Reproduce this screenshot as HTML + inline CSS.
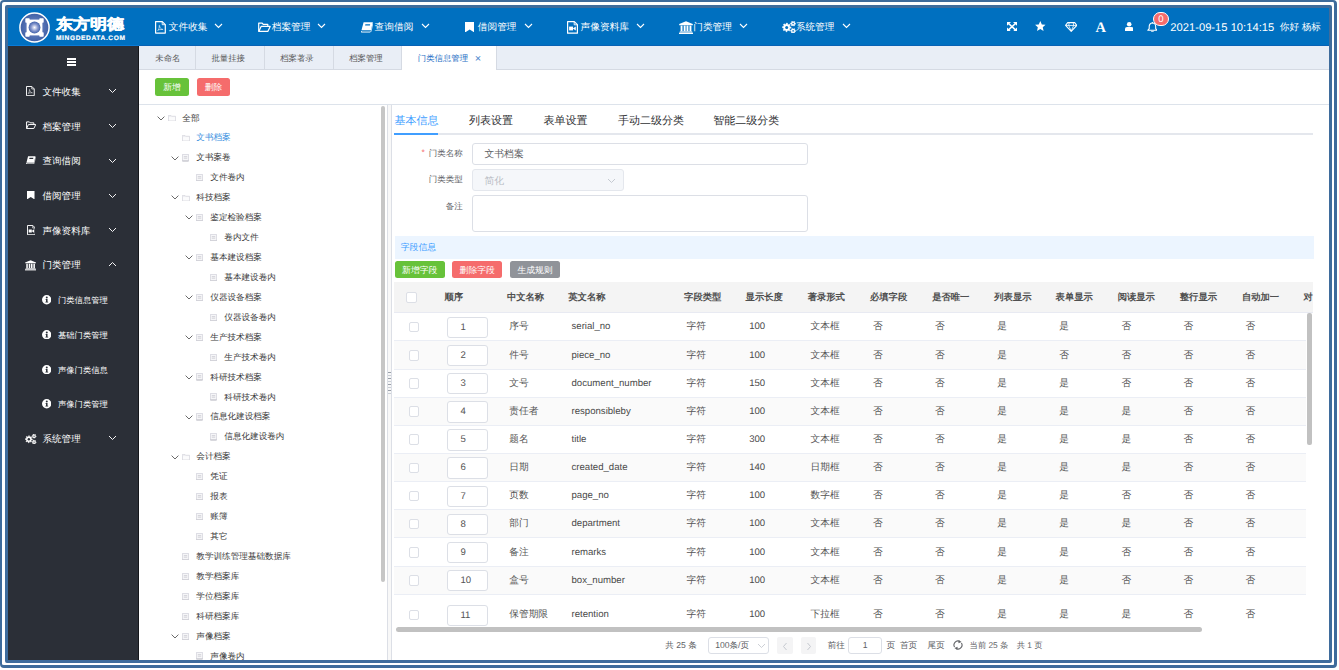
<!DOCTYPE html><html><head><meta charset="utf-8"><style>
*{box-sizing:border-box;margin:0;padding:0}
html,body{width:1339px;height:670px;overflow:hidden;background:#fff;font-family:"Liberation Sans",sans-serif;text-rendering:geometricPrecision}
.a{position:absolute;white-space:nowrap}
.frame-o{position:absolute;left:0;top:0;width:1337px;height:668px;border:solid #3e6b9b;border-width:2px 3px 3px 2px;border-radius:4px}
.frame-i{position:absolute;left:5px;top:5px;width:1327px;height:658px;border:3px solid #3f6c9c;border-radius:2px}
#app{position:absolute;left:8px;top:8px;width:1321px;height:652px;overflow:hidden;background:#fff}
.hdr{position:absolute;left:0;top:0;width:1321px;height:38px;background:#0070c0;border-bottom:1px solid #0862b5}
.nav{position:absolute;top:0;height:38px;color:#fff;font-size:9.7px;line-height:39px}
.side{position:absolute;left:0;top:38px;width:131px;height:614px;background:#2b2f37;border-right:1px solid #15171b}
.sitem{position:absolute;left:0;width:131px;height:20px;color:#fff;font-size:9.55px;line-height:23px}
.tabs{position:absolute;left:131px;top:38px;width:1190px;height:24px;background:#e9eef6;border-bottom:1px solid #d5dae3}
.tab{position:absolute;top:0;height:23px;line-height:24.5px;font-size:8.4px;color:#5a5a5a;text-align:left;padding-left:16.2px;border-right:1px solid #d5dae3}
.btn{position:absolute;height:17.5px;line-height:19.5px;font-size:8.7px;color:#fff;text-align:center;border-radius:2.5px}
.tree{position:absolute;left:131px;top:97px;width:248px;height:555px;overflow:hidden}
.ti{position:absolute;height:20px;line-height:20px;font-size:8.6px;color:#333}
.tc{position:absolute;font-size:9.7px;color:#555;line-height:16px}
.te{position:absolute;font-size:9.6px;color:#4a4a4a;line-height:16px}
</style></head><body>
<div class="frame-o"></div><div class="frame-i"></div>
<div id="app">

<div class="hdr">
<div class="a" style="left:0;top:37px;width:131px;height:1px;background:#0a7bd8"></div>
<svg class="a" style="left:11px;top:4px" width="31" height="31" viewBox="0 0 31 31">
<defs><radialGradient id="lg" cx="50%" cy="50%" r="50%"><stop offset="0" stop-color="#8a9fd0"/><stop offset="0.6" stop-color="#5673b4"/><stop offset="1" stop-color="#3f5fa6"/></radialGradient>
<radialGradient id="lg2" cx="50%" cy="50%" r="50%"><stop offset="0" stop-color="#fff"/><stop offset="0.55" stop-color="#8b9bd0"/><stop offset="1" stop-color="#4262aa"/></radialGradient></defs>
<circle cx="15.5" cy="15.5" r="14.6" fill="url(#lg)" stroke="#fff" stroke-width="1.5"/>
<rect x="7.6" y="7.6" width="15.8" height="15.8" fill="#fff"/>
<rect x="6.3" y="6.3" width="4.4" height="4.4" rx="0.8" fill="#fff"/><rect x="20.3" y="6.3" width="4.4" height="4.4" rx="0.8" fill="#fff"/>
<rect x="6.3" y="20.3" width="4.4" height="4.4" rx="0.8" fill="#fff"/><rect x="20.3" y="20.3" width="4.4" height="4.4" rx="0.8" fill="#fff"/>
<circle cx="15.5" cy="15.5" r="5.9" fill="url(#lg2)"/>
</svg>
<div class="a" style="left:48px;top:4.5px;font-size:17.5px;font-weight:bold;color:#fff;line-height:22px;letter-spacing:0px;-webkit-text-stroke:0.6px #fff;transform:scale(0.97,0.84);transform-origin:0 50%">东方明德</div>
<div class="a" style="left:48px;top:26.8px;font-size:6.6px;font-weight:bold;color:#fff;line-height:8px;letter-spacing:0.62px;-webkit-text-stroke:0.2px #fff">MINGDEDATA.COM</div>
<svg class="a" style="left:147px;top:13px" width="11.00" height="12.70" viewBox="0 0 11 12.7"><path d="M0.6 0.6 H7.3 L10.3 3.6 V12.1 H0.6 Z" fill="none" stroke="#fff" stroke-width="1.2" stroke-linejoin="round"/><path d="M7.2 0.8 V3.7 H10.1" fill="none" stroke="#fff" stroke-width="0.9"/><path d="M2.6 10 C3.6 8.6 4.6 6.4 4.2 4.6 C3.9 4.1 4.9 4.1 4.7 5.2 C4.6 6.5 5.8 8.2 8.2 8.6 M3.2 8.8 L7.8 8.4" fill="none" stroke="#fff" stroke-width="0.6"/></svg>
<div class="nav" style="left:160.8px">文件收集</div>
<svg class="a" style="left:205.9px;top:15px" width="9" height="6" viewBox="0 0 9 6"><path d="M1 1 L4.5 4.5 L8 1" fill="none" stroke="#fff" stroke-width="1.1"/></svg>
<svg class="a" style="left:249.8px;top:13.8px" width="12.80" height="10.20" viewBox="0 0 12.8 10.2"><path d="M0.7 9.4 V1.1 H4.2 L5.2 2.3 H9.8 V4.4" fill="none" stroke="#fff" stroke-width="1.2" stroke-linejoin="round"/><path d="M0.8 9.4 L3.1 4.4 H12.2 L9.8 9.4 Z" fill="none" stroke="#fff" stroke-width="1.2" stroke-linejoin="round"/></svg>
<div class="nav" style="left:263.7px">档案管理</div>
<svg class="a" style="left:309.2px;top:15px" width="9" height="6" viewBox="0 0 9 6"><path d="M1 1 L4.5 4.5 L8 1" fill="none" stroke="#fff" stroke-width="1.1"/></svg>
<svg class="a" style="left:352.6px;top:13.899999999999999px" width="12.20" height="10.80" viewBox="0 0 12.2 10.8"><path d="M2.6 0.3 H11.9 L9.9 8.3 H0.5 Z" fill="#fff"/><path d="M4.4 2.2 H9.2 L8.9 3.6 H4.1 Z" fill="#0070c0"/><path d="M0.4 8.9 H9.6 L9.3 10.6 H0.3 C-0.1 10.2 0 9.3 0.4 8.9 Z" fill="#fff"/><path d="M1 9.5 H9" stroke="#0070c0" stroke-width="0.6"/><path d="M11.9 1.5 L10 9.8" stroke="#fff" stroke-width="0.7"/></svg>
<div class="nav" style="left:366.6px">查询借阅</div>
<svg class="a" style="left:412.5px;top:15px" width="9" height="6" viewBox="0 0 9 6"><path d="M1 1 L4.5 4.5 L8 1" fill="none" stroke="#fff" stroke-width="1.1"/></svg>
<svg class="a" style="left:456.7px;top:13.899999999999999px" width="9.40" height="10.50" viewBox="0 0 9.4 10.5"><path d="M0 0 H9.4 V10.5 L4.7 7.5 L0 10.5 Z" fill="#fff"/></svg>
<div class="nav" style="left:469.8px">借阅管理</div>
<svg class="a" style="left:515.7px;top:15px" width="9" height="6" viewBox="0 0 9 6"><path d="M1 1 L4.5 4.5 L8 1" fill="none" stroke="#fff" stroke-width="1.1"/></svg>
<svg class="a" style="left:558.9px;top:12.899999999999999px" width="11.00" height="12.80" viewBox="0 0 11 12.8"><path d="M0.6 0.6 H7.3 L10.4 3.7 V12.2 H0.6 Z" fill="none" stroke="#fff" stroke-width="1.2" stroke-linejoin="round"/><path d="M7.2 0.8 V3.8 H10.2" fill="none" stroke="#fff" stroke-width="0.9"/><rect x="2.1" y="5.6" width="3.9" height="3.8" fill="#fff"/><path d="M5.8 7.5 L8.8 5.4 V9.6 Z" fill="#fff"/></svg>
<div class="nav" style="left:572.6px">声像资料库</div>
<svg class="a" style="left:628.3px;top:15px" width="9" height="6" viewBox="0 0 9 6"><path d="M1 1 L4.5 4.5 L8 1" fill="none" stroke="#fff" stroke-width="1.1"/></svg>
<svg class="a" style="left:670.9px;top:12.899999999999999px" width="14.00" height="13.00" viewBox="0 0 14 13"><path d="M7 0.2 L13.8 3 V4.2 H0.2 V3 Z" fill="#fff"/><rect x="1.6" y="4.6" width="1.9" height="5.6" fill="#fff"/><rect x="4.7" y="4.6" width="1.9" height="5.6" fill="#fff"/><rect x="7.5" y="4.6" width="1.9" height="5.6" fill="#fff"/><rect x="10.5" y="4.6" width="1.9" height="5.6" fill="#fff"/><rect x="0.8" y="10.4" width="12.4" height="1" fill="#fff"/><rect x="0" y="11.6" width="14" height="1.4" fill="#fff"/></svg>
<div class="nav" style="left:685.2px">门类管理</div>
<svg class="a" style="left:730.7px;top:15px" width="9" height="6" viewBox="0 0 9 6"><path d="M1 1 L4.5 4.5 L8 1" fill="none" stroke="#fff" stroke-width="1.1"/></svg>
<svg class="a" style="left:773.9px;top:12.899999999999999px" width="14.00" height="12.60" viewBox="0 0 14 12.6"><polygon points="9.09,6.18 9.05,7.05 7.68,7.47 7.42,8.03 7.96,9.35 7.32,9.93 6.05,9.26 5.47,9.47 4.92,10.79 4.05,10.75 3.63,9.38 3.07,9.12 1.75,9.66 1.17,9.02 1.84,7.75 1.63,7.17 0.31,6.62 0.35,5.75 1.72,5.33 1.98,4.77 1.44,3.45 2.08,2.87 3.35,3.54 3.93,3.33 4.48,2.01 5.35,2.05 5.77,3.42 6.33,3.68 7.65,3.14 8.23,3.78 7.56,5.05 7.77,5.63" fill="#fff" stroke="#fff" stroke-width="0.5" stroke-linejoin="round"/><circle cx="4.7" cy="6.4" r="1.5" fill="#0070c0"/><polygon points="13.69,2.43 13.65,3.11 12.78,3.43 12.51,3.83 12.54,4.76 11.94,5.06 11.22,4.47 10.73,4.44 9.95,4.93 9.39,4.55 9.54,3.64 9.33,3.20 8.51,2.77 8.55,2.09 9.42,1.77 9.69,1.37 9.66,0.44 10.26,0.14 10.98,0.73 11.47,0.76 12.25,0.27 12.81,0.65 12.66,1.56 12.87,2.00" fill="#fff" stroke="#fff" stroke-width="0.5" stroke-linejoin="round"/><circle cx="11.1" cy="2.6" r="0.8" fill="#0070c0"/><polygon points="13.69,9.73 13.65,10.41 12.78,10.73 12.51,11.13 12.54,12.06 11.94,12.36 11.22,11.77 10.73,11.74 9.95,12.23 9.39,11.85 9.54,10.94 9.33,10.50 8.51,10.07 8.55,9.39 9.42,9.07 9.69,8.67 9.66,7.74 10.26,7.44 10.98,8.03 11.47,8.06 12.25,7.57 12.81,7.95 12.66,8.86 12.87,9.30" fill="#fff" stroke="#fff" stroke-width="0.5" stroke-linejoin="round"/><circle cx="11.1" cy="9.9" r="0.8" fill="#0070c0"/></svg>
<div class="nav" style="left:787.7px">系统管理</div>
<svg class="a" style="left:834px;top:15px" width="9" height="6" viewBox="0 0 9 6"><path d="M1 1 L4.5 4.5 L8 1" fill="none" stroke="#fff" stroke-width="1.1"/></svg>
<svg class="a" style="left:998.6px;top:13.9px" width="10" height="9.3" viewBox="0 0 10 9.3"><path d="M0 0 H4 L0 3.8 Z M10 0 H6 L10 3.8 Z M0 9.3 H4 L0 5.5 Z M10 9.3 H6 L10 5.5 Z" fill="#fff"/><path d="M1 1 L9 8.3 M9 1 L1 8.3" stroke="#fff" stroke-width="1.6"/></svg>
<svg class="a" style="left:1027.3px;top:12.9px" width="10.6" height="10.3" viewBox="0 0 24 23"><path d="M12 0 L15.5 7.6 L23.8 8.5 L17.6 14.1 L19.4 22.3 L12 18.1 L4.6 22.3 L6.4 14.1 L0.2 8.5 L8.5 7.6 Z" fill="#fff"/></svg>
<svg class="a" style="left:1056.6px;top:14.2px" width="12.4" height="10" viewBox="0 0 12.4 9.6" preserveAspectRatio="none"><path d="M2.7 0.6 H9.7 L11.8 3.3 L6.2 9 L0.6 3.3 Z" fill="none" stroke="#fff" stroke-width="1.1" stroke-linejoin="round"/><path d="M0.8 3.3 H11.6 M4.2 0.7 L3.7 3.3 L6.2 8.6 L8.7 3.3 L8.2 0.7" fill="none" stroke="#fff" stroke-width="0.8"/></svg>
<div class="a" style="left:1087.6px;top:11.8px;font-family:'Liberation Serif',serif;font-weight:bold;font-size:14.5px;line-height:16px;color:#fff">A</div>
<svg class="a" style="left:1117px;top:14.2px" width="8.4" height="8.9" viewBox="0 0 8.4 8.9"><circle cx="4.2" cy="2.3" r="2.3" fill="#fff"/><path d="M0 8.9 V6.9 Q0 5 2 5 H6.4 Q8.4 5 8.4 6.9 V8.9 Z" fill="#fff"/></svg>
<svg class="a" style="left:1138.5px;top:14.2px" width="10.9" height="10.2" viewBox="0 0 10.9 10.2"><path d="M5.45 1 C3.2 1 2.2 2.9 2.2 4.8 V6.7 L0.8 8.3 H10.1 L8.7 6.7 V4.8 C8.7 2.9 7.7 1 5.45 1 Z" fill="none" stroke="#fff" stroke-width="1.1" stroke-linejoin="round"/><path d="M4.2 8.8 A1.3 1.3 0 0 0 6.7 8.8" fill="none" stroke="#fff" stroke-width="1"/><circle cx="5.45" cy="0.8" r="0.7" fill="#fff"/></svg>
<div class="a" style="left:1145px;top:4.3px;width:15.6px;height:13.9px;border-radius:7px;background:#f56c6c;border:1px solid #fff;color:#fff;font-size:9.6px;line-height:13.4px;text-align:center">0</div>
<div class="a" style="left:1162.3px;top:11.5px;font-size:11.2px;line-height:16px;color:#fff">2021-09-15 10:14:15</div>
<div class="a" style="left:1271.8px;top:12px;font-size:9.6px;line-height:16px;color:#fff">你好 杨标</div>
</div>
<div class="side">
<div class="a" style="left:59px;top:12px;width:9px;height:1.6px;background:#fff;box-shadow:0 3px 0 #fff,0 6px 0 #fff"></div>
<div class="sitem" style="top:34.9px"><span class="a" style="left:34.5px">文件收集</span></div>
<svg class="a" style="left:18.2px;top:39.7px" width="8.80" height="10.16" viewBox="0 0 11 12.7"><path d="M0.6 0.6 H7.3 L10.3 3.6 V12.1 H0.6 Z" fill="none" stroke="#fff" stroke-width="1.2" stroke-linejoin="round"/><path d="M7.2 0.8 V3.7 H10.1" fill="none" stroke="#fff" stroke-width="0.9"/><path d="M2.6 10 C3.6 8.6 4.6 6.4 4.2 4.6 C3.9 4.1 4.9 4.1 4.7 5.2 C4.6 6.5 5.8 8.2 8.2 8.6 M3.2 8.8 L7.8 8.4" fill="none" stroke="#fff" stroke-width="0.6"/></svg>
<svg class="a" style="left:100.2px;top:42.400000000000006px" width="9" height="6" viewBox="0 0 9 6"><path d="M1 1 L4.5 4.5 L8 1" fill="none" stroke="#fff" stroke-width="0.95"/></svg>
<div class="sitem" style="top:69.6px"><span class="a" style="left:34.5px">档案管理</span></div>
<svg class="a" style="left:17.7px;top:75px" width="10.24" height="8.16" viewBox="0 0 12.8 10.2"><path d="M0.7 9.4 V1.1 H4.2 L5.2 2.3 H9.8 V4.4" fill="none" stroke="#fff" stroke-width="1.2" stroke-linejoin="round"/><path d="M0.8 9.4 L3.1 4.4 H12.2 L9.8 9.4 Z" fill="none" stroke="#fff" stroke-width="1.2" stroke-linejoin="round"/></svg>
<svg class="a" style="left:100.2px;top:77.10000000000001px" width="9" height="6" viewBox="0 0 9 6"><path d="M1 1 L4.5 4.5 L8 1" fill="none" stroke="#fff" stroke-width="0.95"/></svg>
<div class="sitem" style="top:104.3px"><span class="a" style="left:34.5px">查询借阅</span></div>
<svg class="a" style="left:18.2px;top:109.69999999999999px" width="9.76" height="8.64" viewBox="0 0 12.2 10.8"><path d="M2.6 0.3 H11.9 L9.9 8.3 H0.5 Z" fill="#fff"/><path d="M4.4 2.2 H9.2 L8.9 3.6 H4.1 Z" fill="#2b3038"/><path d="M0.4 8.9 H9.6 L9.3 10.6 H0.3 C-0.1 10.2 0 9.3 0.4 8.9 Z" fill="#fff"/><path d="M1 9.5 H9" stroke="#2b3038" stroke-width="0.6"/><path d="M11.9 1.5 L10 9.8" stroke="#fff" stroke-width="0.7"/></svg>
<svg class="a" style="left:100.2px;top:111.80000000000001px" width="9" height="6" viewBox="0 0 9 6"><path d="M1 1 L4.5 4.5 L8 1" fill="none" stroke="#fff" stroke-width="0.95"/></svg>
<div class="sitem" style="top:139.0px"><span class="a" style="left:34.5px">借阅管理</span></div>
<svg class="a" style="left:19px;top:145px" width="7.52" height="8.40" viewBox="0 0 9.4 10.5"><path d="M0 0 H9.4 V10.5 L4.7 7.5 L0 10.5 Z" fill="#fff"/></svg>
<svg class="a" style="left:100.2px;top:146.5px" width="9" height="6" viewBox="0 0 9 6"><path d="M1 1 L4.5 4.5 L8 1" fill="none" stroke="#fff" stroke-width="0.95"/></svg>
<div class="sitem" style="top:173.7px"><span class="a" style="left:34.5px">声像资料库</span></div>
<svg class="a" style="left:18.6px;top:179px" width="8.80" height="10.24" viewBox="0 0 11 12.8"><path d="M0.6 0.6 H7.3 L10.4 3.7 V12.2 H0.6 Z" fill="none" stroke="#fff" stroke-width="1.2" stroke-linejoin="round"/><path d="M7.2 0.8 V3.8 H10.2" fill="none" stroke="#fff" stroke-width="0.9"/><rect x="2.1" y="5.6" width="3.9" height="3.8" fill="#fff"/><path d="M5.8 7.5 L8.8 5.4 V9.6 Z" fill="#fff"/></svg>
<svg class="a" style="left:100.2px;top:181.20000000000002px" width="9" height="6" viewBox="0 0 9 6"><path d="M1 1 L4.5 4.5 L8 1" fill="none" stroke="#fff" stroke-width="0.95"/></svg>
<div class="sitem" style="top:208.4px"><span class="a" style="left:34.5px">门类管理</span></div>
<svg class="a" style="left:16.9px;top:214.2px" width="11.20" height="10.40" viewBox="0 0 14 13"><path d="M7 0.2 L13.8 3 V4.2 H0.2 V3 Z" fill="#fff"/><rect x="1.6" y="4.6" width="1.9" height="5.6" fill="#fff"/><rect x="4.7" y="4.6" width="1.9" height="5.6" fill="#fff"/><rect x="7.5" y="4.6" width="1.9" height="5.6" fill="#fff"/><rect x="10.5" y="4.6" width="1.9" height="5.6" fill="#fff"/><rect x="0.8" y="10.4" width="12.4" height="1" fill="#fff"/><rect x="0" y="11.6" width="14" height="1.4" fill="#fff"/></svg>
<svg class="a" style="left:100.2px;top:214.9px" width="9" height="6" viewBox="0 0 9 6"><path d="M1 5 L4.5 1.5 L8 5" fill="none" stroke="#fff" stroke-width="0.95"/></svg>
<div class="sitem" style="top:243.1px;font-size:8.3px"><svg class="a" style="left:33.8px;top:6.2px" width="9.4" height="9.4" viewBox="0 0 10 10"><circle cx="5" cy="5" r="5" fill="#fff"/><circle cx="5.1" cy="2.6" r="1.05" fill="#2b3038"/><path d="M3.9 4.3 H5.9 V7.2 H6.6 V8.1 H3.6 V7.2 H4.3 V5.2 H3.9 Z" fill="#2b3038"/></svg><span class="a" style="left:50px">门类信息管理</span></div>
<div class="sitem" style="top:277.8px;font-size:8.3px"><svg class="a" style="left:33.8px;top:6.2px" width="9.4" height="9.4" viewBox="0 0 10 10"><circle cx="5" cy="5" r="5" fill="#fff"/><circle cx="5.1" cy="2.6" r="1.05" fill="#2b3038"/><path d="M3.9 4.3 H5.9 V7.2 H6.6 V8.1 H3.6 V7.2 H4.3 V5.2 H3.9 Z" fill="#2b3038"/></svg><span class="a" style="left:50px">基础门类管理</span></div>
<div class="sitem" style="top:312.5px;font-size:8.3px"><svg class="a" style="left:33.8px;top:6.2px" width="9.4" height="9.4" viewBox="0 0 10 10"><circle cx="5" cy="5" r="5" fill="#fff"/><circle cx="5.1" cy="2.6" r="1.05" fill="#2b3038"/><path d="M3.9 4.3 H5.9 V7.2 H6.6 V8.1 H3.6 V7.2 H4.3 V5.2 H3.9 Z" fill="#2b3038"/></svg><span class="a" style="left:50px">声像门类信息</span></div>
<div class="sitem" style="top:347.2px;font-size:8.3px"><svg class="a" style="left:33.8px;top:6.2px" width="9.4" height="9.4" viewBox="0 0 10 10"><circle cx="5" cy="5" r="5" fill="#fff"/><circle cx="5.1" cy="2.6" r="1.05" fill="#2b3038"/><path d="M3.9 4.3 H5.9 V7.2 H6.6 V8.1 H3.6 V7.2 H4.3 V5.2 H3.9 Z" fill="#2b3038"/></svg><span class="a" style="left:50px">声像门类管理</span></div>
<div class="sitem" style="top:381.9px"><span class="a" style="left:34.5px">系统管理</span></div>
<svg class="a" style="left:17.2px;top:387.8px" width="11.48" height="10.33" viewBox="0 0 14 12.6"><polygon points="9.09,6.18 9.05,7.05 7.68,7.47 7.42,8.03 7.96,9.35 7.32,9.93 6.05,9.26 5.47,9.47 4.92,10.79 4.05,10.75 3.63,9.38 3.07,9.12 1.75,9.66 1.17,9.02 1.84,7.75 1.63,7.17 0.31,6.62 0.35,5.75 1.72,5.33 1.98,4.77 1.44,3.45 2.08,2.87 3.35,3.54 3.93,3.33 4.48,2.01 5.35,2.05 5.77,3.42 6.33,3.68 7.65,3.14 8.23,3.78 7.56,5.05 7.77,5.63" fill="#fff" stroke="#fff" stroke-width="0.5" stroke-linejoin="round"/><circle cx="4.7" cy="6.4" r="1.5" fill="#2b3038"/><polygon points="13.69,2.43 13.65,3.11 12.78,3.43 12.51,3.83 12.54,4.76 11.94,5.06 11.22,4.47 10.73,4.44 9.95,4.93 9.39,4.55 9.54,3.64 9.33,3.20 8.51,2.77 8.55,2.09 9.42,1.77 9.69,1.37 9.66,0.44 10.26,0.14 10.98,0.73 11.47,0.76 12.25,0.27 12.81,0.65 12.66,1.56 12.87,2.00" fill="#fff" stroke="#fff" stroke-width="0.5" stroke-linejoin="round"/><circle cx="11.1" cy="2.6" r="0.8" fill="#2b3038"/><polygon points="13.69,9.73 13.65,10.41 12.78,10.73 12.51,11.13 12.54,12.06 11.94,12.36 11.22,11.77 10.73,11.74 9.95,12.23 9.39,11.85 9.54,10.94 9.33,10.50 8.51,10.07 8.55,9.39 9.42,9.07 9.69,8.67 9.66,7.74 10.26,7.44 10.98,8.03 11.47,8.06 12.25,7.57 12.81,7.95 12.66,8.86 12.87,9.30" fill="#fff" stroke="#fff" stroke-width="0.5" stroke-linejoin="round"/><circle cx="11.1" cy="9.9" r="0.8" fill="#2b3038"/></svg>
<svg class="a" style="left:100.2px;top:389.4px" width="9" height="6" viewBox="0 0 9 6"><path d="M1 1 L4.5 4.5 L8 1" fill="none" stroke="#fff" stroke-width="0.95"/></svg>
</div>
<div class="tabs">
<div class="tab" style="left:0.0px;width:57.3px;padding-left:16.3px">未命名</div>
<div class="tab" style="left:56.6px;width:69.5px;padding-left:15.8px">批量挂接</div>
<div class="tab" style="left:125.4px;width:69.7px;padding-left:15.8px">档案著录</div>
<div class="tab" style="left:194.4px;width:69.1px;padding-left:15.8px">档案管理</div>
<div class="tab" style="left:262.8px;width:95.6px;height:24px;background:#fff;color:#1f6fc5;text-align:left;padding-left:16px">门类信息管理<span class="a" style="left:72.9px;top:1.2px;color:#4a86cc;font-size:11px">×</span></div>
</div>
<div class="a" style="left:131px;top:62px;width:1190px;height:35px;border-bottom:1px solid #dde3eb"></div>
<div class="btn" style="left:147.3px;top:70.4px;width:33.3px;background:#67c23a">新增</div>
<div class="btn" style="left:189px;top:70.4px;width:33px;background:#f56c6c">删除</div>
<svg class="a" style="left:149.0px;top:107.7px" width="8" height="5" viewBox="0 0 8 5"><path d="M0.6 0.6 L4 4 L7.4 0.6" fill="none" stroke="#6a6a6a" stroke-width="1"/></svg>
<svg class="a" style="left:160.1px;top:106.9px" width="8" height="6.4" viewBox="0 0 8 6.4"><path d="M0.4 0.4 H3 L3.7 1.3 H7.6 V6 H0.4 Z" fill="#fbfbfc" stroke="#d4d4dc" stroke-width="0.8"/><path d="M0.4 1.6 H7.6" stroke="#e2e2e8" stroke-width="0.6"/></svg>
<div class="a" style="left:174.3px;top:99.5px;line-height:20px;font-size:8.6px;color:#3a3a3a">全部</div>
<svg class="a" style="left:174.1px;top:126.8px" width="8" height="6.4" viewBox="0 0 8 6.4"><path d="M0.4 0.4 H3 L3.7 1.3 H7.6 V6 H0.4 Z" fill="#fbfbfc" stroke="#d4d4dc" stroke-width="0.8"/><path d="M0.4 1.6 H7.6" stroke="#e2e2e8" stroke-width="0.6"/></svg>
<div class="a" style="left:188.3px;top:119.4px;line-height:20px;font-size:8.6px;color:#3b90e0">文书档案</div>
<svg class="a" style="left:163.0px;top:147.6px" width="8" height="5" viewBox="0 0 8 5"><path d="M0.6 0.6 L4 4 L7.4 0.6" fill="none" stroke="#6a6a6a" stroke-width="1"/></svg>
<svg class="a" style="left:174.1px;top:146.2px" width="7" height="7.4" viewBox="0 0 7 7.4"><path d="M0.4 0.4 H6.6 V7 H0.4 Z" fill="#f6f6f8" stroke="#d2d2da" stroke-width="0.8"/><path d="M1.8 2.6 H5.2 M1.8 4.2 H5.2" stroke="#c4c4cc" stroke-width="0.7"/><path d="M0.4 7 H6.6" stroke="#b8b8c0" stroke-width="0.8"/></svg>
<div class="a" style="left:188.3px;top:139.4px;line-height:20px;font-size:8.6px;color:#3a3a3a">文书案卷</div>
<svg class="a" style="left:188.1px;top:166.1px" width="7" height="7.4" viewBox="0 0 7 7.4"><path d="M0.4 0.4 H6.6 V7 H0.4 Z" fill="#f6f6f8" stroke="#d2d2da" stroke-width="0.8"/><path d="M1.8 2.6 H5.2 M1.8 4.2 H5.2" stroke="#c4c4cc" stroke-width="0.7"/><path d="M0.4 7 H6.6" stroke="#b8b8c0" stroke-width="0.8"/></svg>
<div class="a" style="left:202.3px;top:159.3px;line-height:20px;font-size:8.6px;color:#3a3a3a">文件卷内</div>
<svg class="a" style="left:163.0px;top:187.4px" width="8" height="5" viewBox="0 0 8 5"><path d="M0.6 0.6 L4 4 L7.4 0.6" fill="none" stroke="#6a6a6a" stroke-width="1"/></svg>
<svg class="a" style="left:174.1px;top:186.6px" width="8" height="6.4" viewBox="0 0 8 6.4"><path d="M0.4 0.4 H3 L3.7 1.3 H7.6 V6 H0.4 Z" fill="#fbfbfc" stroke="#d4d4dc" stroke-width="0.8"/><path d="M0.4 1.6 H7.6" stroke="#e2e2e8" stroke-width="0.6"/></svg>
<div class="a" style="left:188.3px;top:179.2px;line-height:20px;font-size:8.6px;color:#3a3a3a">科技档案</div>
<svg class="a" style="left:177.0px;top:207.3px" width="8" height="5" viewBox="0 0 8 5"><path d="M0.6 0.6 L4 4 L7.4 0.6" fill="none" stroke="#6a6a6a" stroke-width="1"/></svg>
<svg class="a" style="left:188.1px;top:206.0px" width="7" height="7.4" viewBox="0 0 7 7.4"><path d="M0.4 0.4 H6.6 V7 H0.4 Z" fill="#f6f6f8" stroke="#d2d2da" stroke-width="0.8"/><path d="M1.8 2.6 H5.2 M1.8 4.2 H5.2" stroke="#c4c4cc" stroke-width="0.7"/><path d="M0.4 7 H6.6" stroke="#b8b8c0" stroke-width="0.8"/></svg>
<div class="a" style="left:202.3px;top:199.2px;line-height:20px;font-size:8.6px;color:#3a3a3a">鉴定检验档案</div>
<svg class="a" style="left:202.1px;top:225.9px" width="7" height="7.4" viewBox="0 0 7 7.4"><path d="M0.4 0.4 H6.6 V7 H0.4 Z" fill="#f6f6f8" stroke="#d2d2da" stroke-width="0.8"/><path d="M1.8 2.6 H5.2 M1.8 4.2 H5.2" stroke="#c4c4cc" stroke-width="0.7"/><path d="M0.4 7 H6.6" stroke="#b8b8c0" stroke-width="0.8"/></svg>
<div class="a" style="left:216.3px;top:219.1px;line-height:20px;font-size:8.6px;color:#3a3a3a">卷内文件</div>
<svg class="a" style="left:177.0px;top:247.2px" width="8" height="5" viewBox="0 0 8 5"><path d="M0.6 0.6 L4 4 L7.4 0.6" fill="none" stroke="#6a6a6a" stroke-width="1"/></svg>
<svg class="a" style="left:188.1px;top:245.8px" width="7" height="7.4" viewBox="0 0 7 7.4"><path d="M0.4 0.4 H6.6 V7 H0.4 Z" fill="#f6f6f8" stroke="#d2d2da" stroke-width="0.8"/><path d="M1.8 2.6 H5.2 M1.8 4.2 H5.2" stroke="#c4c4cc" stroke-width="0.7"/><path d="M0.4 7 H6.6" stroke="#b8b8c0" stroke-width="0.8"/></svg>
<div class="a" style="left:202.3px;top:239.0px;line-height:20px;font-size:8.6px;color:#3a3a3a">基本建设档案</div>
<svg class="a" style="left:202.1px;top:265.7px" width="7" height="7.4" viewBox="0 0 7 7.4"><path d="M0.4 0.4 H6.6 V7 H0.4 Z" fill="#f6f6f8" stroke="#d2d2da" stroke-width="0.8"/><path d="M1.8 2.6 H5.2 M1.8 4.2 H5.2" stroke="#c4c4cc" stroke-width="0.7"/><path d="M0.4 7 H6.6" stroke="#b8b8c0" stroke-width="0.8"/></svg>
<div class="a" style="left:216.3px;top:258.9px;line-height:20px;font-size:8.6px;color:#3a3a3a">基本建设卷内</div>
<svg class="a" style="left:177.0px;top:287.1px" width="8" height="5" viewBox="0 0 8 5"><path d="M0.6 0.6 L4 4 L7.4 0.6" fill="none" stroke="#6a6a6a" stroke-width="1"/></svg>
<svg class="a" style="left:188.1px;top:285.7px" width="7" height="7.4" viewBox="0 0 7 7.4"><path d="M0.4 0.4 H6.6 V7 H0.4 Z" fill="#f6f6f8" stroke="#d2d2da" stroke-width="0.8"/><path d="M1.8 2.6 H5.2 M1.8 4.2 H5.2" stroke="#c4c4cc" stroke-width="0.7"/><path d="M0.4 7 H6.6" stroke="#b8b8c0" stroke-width="0.8"/></svg>
<div class="a" style="left:202.3px;top:278.9px;line-height:20px;font-size:8.6px;color:#3a3a3a">仪器设备档案</div>
<svg class="a" style="left:202.1px;top:305.6px" width="7" height="7.4" viewBox="0 0 7 7.4"><path d="M0.4 0.4 H6.6 V7 H0.4 Z" fill="#f6f6f8" stroke="#d2d2da" stroke-width="0.8"/><path d="M1.8 2.6 H5.2 M1.8 4.2 H5.2" stroke="#c4c4cc" stroke-width="0.7"/><path d="M0.4 7 H6.6" stroke="#b8b8c0" stroke-width="0.8"/></svg>
<div class="a" style="left:216.3px;top:298.8px;line-height:20px;font-size:8.6px;color:#3a3a3a">仪器设备卷内</div>
<svg class="a" style="left:177.0px;top:326.9px" width="8" height="5" viewBox="0 0 8 5"><path d="M0.6 0.6 L4 4 L7.4 0.6" fill="none" stroke="#6a6a6a" stroke-width="1"/></svg>
<svg class="a" style="left:188.1px;top:325.5px" width="7" height="7.4" viewBox="0 0 7 7.4"><path d="M0.4 0.4 H6.6 V7 H0.4 Z" fill="#f6f6f8" stroke="#d2d2da" stroke-width="0.8"/><path d="M1.8 2.6 H5.2 M1.8 4.2 H5.2" stroke="#c4c4cc" stroke-width="0.7"/><path d="M0.4 7 H6.6" stroke="#b8b8c0" stroke-width="0.8"/></svg>
<div class="a" style="left:202.3px;top:318.7px;line-height:20px;font-size:8.6px;color:#3a3a3a">生产技术档案</div>
<svg class="a" style="left:202.1px;top:345.5px" width="7" height="7.4" viewBox="0 0 7 7.4"><path d="M0.4 0.4 H6.6 V7 H0.4 Z" fill="#f6f6f8" stroke="#d2d2da" stroke-width="0.8"/><path d="M1.8 2.6 H5.2 M1.8 4.2 H5.2" stroke="#c4c4cc" stroke-width="0.7"/><path d="M0.4 7 H6.6" stroke="#b8b8c0" stroke-width="0.8"/></svg>
<div class="a" style="left:216.3px;top:338.7px;line-height:20px;font-size:8.6px;color:#3a3a3a">生产技术卷内</div>
<svg class="a" style="left:177.0px;top:366.8px" width="8" height="5" viewBox="0 0 8 5"><path d="M0.6 0.6 L4 4 L7.4 0.6" fill="none" stroke="#6a6a6a" stroke-width="1"/></svg>
<svg class="a" style="left:188.1px;top:365.4px" width="7" height="7.4" viewBox="0 0 7 7.4"><path d="M0.4 0.4 H6.6 V7 H0.4 Z" fill="#f6f6f8" stroke="#d2d2da" stroke-width="0.8"/><path d="M1.8 2.6 H5.2 M1.8 4.2 H5.2" stroke="#c4c4cc" stroke-width="0.7"/><path d="M0.4 7 H6.6" stroke="#b8b8c0" stroke-width="0.8"/></svg>
<div class="a" style="left:202.3px;top:358.6px;line-height:20px;font-size:8.6px;color:#3a3a3a">科研技术档案</div>
<svg class="a" style="left:202.1px;top:385.3px" width="7" height="7.4" viewBox="0 0 7 7.4"><path d="M0.4 0.4 H6.6 V7 H0.4 Z" fill="#f6f6f8" stroke="#d2d2da" stroke-width="0.8"/><path d="M1.8 2.6 H5.2 M1.8 4.2 H5.2" stroke="#c4c4cc" stroke-width="0.7"/><path d="M0.4 7 H6.6" stroke="#b8b8c0" stroke-width="0.8"/></svg>
<div class="a" style="left:216.3px;top:378.5px;line-height:20px;font-size:8.6px;color:#3a3a3a">科研技术卷内</div>
<svg class="a" style="left:177.0px;top:406.6px" width="8" height="5" viewBox="0 0 8 5"><path d="M0.6 0.6 L4 4 L7.4 0.6" fill="none" stroke="#6a6a6a" stroke-width="1"/></svg>
<svg class="a" style="left:188.1px;top:405.2px" width="7" height="7.4" viewBox="0 0 7 7.4"><path d="M0.4 0.4 H6.6 V7 H0.4 Z" fill="#f6f6f8" stroke="#d2d2da" stroke-width="0.8"/><path d="M1.8 2.6 H5.2 M1.8 4.2 H5.2" stroke="#c4c4cc" stroke-width="0.7"/><path d="M0.4 7 H6.6" stroke="#b8b8c0" stroke-width="0.8"/></svg>
<div class="a" style="left:202.3px;top:398.4px;line-height:20px;font-size:8.6px;color:#3a3a3a">信息化建设档案</div>
<svg class="a" style="left:202.1px;top:425.2px" width="7" height="7.4" viewBox="0 0 7 7.4"><path d="M0.4 0.4 H6.6 V7 H0.4 Z" fill="#f6f6f8" stroke="#d2d2da" stroke-width="0.8"/><path d="M1.8 2.6 H5.2 M1.8 4.2 H5.2" stroke="#c4c4cc" stroke-width="0.7"/><path d="M0.4 7 H6.6" stroke="#b8b8c0" stroke-width="0.8"/></svg>
<div class="a" style="left:216.3px;top:418.4px;line-height:20px;font-size:8.6px;color:#3a3a3a">信息化建设卷内</div>
<svg class="a" style="left:163.0px;top:446.5px" width="8" height="5" viewBox="0 0 8 5"><path d="M0.6 0.6 L4 4 L7.4 0.6" fill="none" stroke="#6a6a6a" stroke-width="1"/></svg>
<svg class="a" style="left:174.1px;top:445.7px" width="8" height="6.4" viewBox="0 0 8 6.4"><path d="M0.4 0.4 H3 L3.7 1.3 H7.6 V6 H0.4 Z" fill="#fbfbfc" stroke="#d4d4dc" stroke-width="0.8"/><path d="M0.4 1.6 H7.6" stroke="#e2e2e8" stroke-width="0.6"/></svg>
<div class="a" style="left:188.3px;top:438.3px;line-height:20px;font-size:8.6px;color:#3a3a3a">会计档案</div>
<svg class="a" style="left:188.1px;top:465.0px" width="7" height="7.4" viewBox="0 0 7 7.4"><path d="M0.4 0.4 H6.6 V7 H0.4 Z" fill="#f6f6f8" stroke="#d2d2da" stroke-width="0.8"/><path d="M1.8 2.6 H5.2 M1.8 4.2 H5.2" stroke="#c4c4cc" stroke-width="0.7"/><path d="M0.4 7 H6.6" stroke="#b8b8c0" stroke-width="0.8"/></svg>
<div class="a" style="left:202.3px;top:458.2px;line-height:20px;font-size:8.6px;color:#3a3a3a">凭证</div>
<svg class="a" style="left:188.1px;top:485.0px" width="7" height="7.4" viewBox="0 0 7 7.4"><path d="M0.4 0.4 H6.6 V7 H0.4 Z" fill="#f6f6f8" stroke="#d2d2da" stroke-width="0.8"/><path d="M1.8 2.6 H5.2 M1.8 4.2 H5.2" stroke="#c4c4cc" stroke-width="0.7"/><path d="M0.4 7 H6.6" stroke="#b8b8c0" stroke-width="0.8"/></svg>
<div class="a" style="left:202.3px;top:478.2px;line-height:20px;font-size:8.6px;color:#3a3a3a">报表</div>
<svg class="a" style="left:188.1px;top:504.9px" width="7" height="7.4" viewBox="0 0 7 7.4"><path d="M0.4 0.4 H6.6 V7 H0.4 Z" fill="#f6f6f8" stroke="#d2d2da" stroke-width="0.8"/><path d="M1.8 2.6 H5.2 M1.8 4.2 H5.2" stroke="#c4c4cc" stroke-width="0.7"/><path d="M0.4 7 H6.6" stroke="#b8b8c0" stroke-width="0.8"/></svg>
<div class="a" style="left:202.3px;top:498.1px;line-height:20px;font-size:8.6px;color:#3a3a3a">账簿</div>
<svg class="a" style="left:188.1px;top:524.8px" width="7" height="7.4" viewBox="0 0 7 7.4"><path d="M0.4 0.4 H6.6 V7 H0.4 Z" fill="#f6f6f8" stroke="#d2d2da" stroke-width="0.8"/><path d="M1.8 2.6 H5.2 M1.8 4.2 H5.2" stroke="#c4c4cc" stroke-width="0.7"/><path d="M0.4 7 H6.6" stroke="#b8b8c0" stroke-width="0.8"/></svg>
<div class="a" style="left:202.3px;top:518.0px;line-height:20px;font-size:8.6px;color:#3a3a3a">其它</div>
<svg class="a" style="left:174.1px;top:544.8px" width="7" height="7.4" viewBox="0 0 7 7.4"><path d="M0.4 0.4 H6.6 V7 H0.4 Z" fill="#f6f6f8" stroke="#d2d2da" stroke-width="0.8"/><path d="M1.8 2.6 H5.2 M1.8 4.2 H5.2" stroke="#c4c4cc" stroke-width="0.7"/><path d="M0.4 7 H6.6" stroke="#b8b8c0" stroke-width="0.8"/></svg>
<div class="a" style="left:188.3px;top:538.0px;line-height:20px;font-size:8.6px;color:#3a3a3a">教学训练管理基础数据库</div>
<svg class="a" style="left:174.1px;top:564.7px" width="7" height="7.4" viewBox="0 0 7 7.4"><path d="M0.4 0.4 H6.6 V7 H0.4 Z" fill="#f6f6f8" stroke="#d2d2da" stroke-width="0.8"/><path d="M1.8 2.6 H5.2 M1.8 4.2 H5.2" stroke="#c4c4cc" stroke-width="0.7"/><path d="M0.4 7 H6.6" stroke="#b8b8c0" stroke-width="0.8"/></svg>
<div class="a" style="left:188.3px;top:557.9px;line-height:20px;font-size:8.6px;color:#3a3a3a">教学档案库</div>
<svg class="a" style="left:174.1px;top:584.6px" width="7" height="7.4" viewBox="0 0 7 7.4"><path d="M0.4 0.4 H6.6 V7 H0.4 Z" fill="#f6f6f8" stroke="#d2d2da" stroke-width="0.8"/><path d="M1.8 2.6 H5.2 M1.8 4.2 H5.2" stroke="#c4c4cc" stroke-width="0.7"/><path d="M0.4 7 H6.6" stroke="#b8b8c0" stroke-width="0.8"/></svg>
<div class="a" style="left:188.3px;top:577.8px;line-height:20px;font-size:8.6px;color:#3a3a3a">学位档案库</div>
<svg class="a" style="left:174.1px;top:604.5px" width="7" height="7.4" viewBox="0 0 7 7.4"><path d="M0.4 0.4 H6.6 V7 H0.4 Z" fill="#f6f6f8" stroke="#d2d2da" stroke-width="0.8"/><path d="M1.8 2.6 H5.2 M1.8 4.2 H5.2" stroke="#c4c4cc" stroke-width="0.7"/><path d="M0.4 7 H6.6" stroke="#b8b8c0" stroke-width="0.8"/></svg>
<div class="a" style="left:188.3px;top:597.8px;line-height:20px;font-size:8.6px;color:#3a3a3a">科研档案库</div>
<svg class="a" style="left:163.0px;top:625.9px" width="8" height="5" viewBox="0 0 8 5"><path d="M0.6 0.6 L4 4 L7.4 0.6" fill="none" stroke="#6a6a6a" stroke-width="1"/></svg>
<svg class="a" style="left:174.1px;top:624.5px" width="7" height="7.4" viewBox="0 0 7 7.4"><path d="M0.4 0.4 H6.6 V7 H0.4 Z" fill="#f6f6f8" stroke="#d2d2da" stroke-width="0.8"/><path d="M1.8 2.6 H5.2 M1.8 4.2 H5.2" stroke="#c4c4cc" stroke-width="0.7"/><path d="M0.4 7 H6.6" stroke="#b8b8c0" stroke-width="0.8"/></svg>
<div class="a" style="left:188.3px;top:617.7px;line-height:20px;font-size:8.6px;color:#3a3a3a">声像档案</div>
<svg class="a" style="left:188.1px;top:644.4px" width="7" height="7.4" viewBox="0 0 7 7.4"><path d="M0.4 0.4 H6.6 V7 H0.4 Z" fill="#f6f6f8" stroke="#d2d2da" stroke-width="0.8"/><path d="M1.8 2.6 H5.2 M1.8 4.2 H5.2" stroke="#c4c4cc" stroke-width="0.7"/><path d="M0.4 7 H6.6" stroke="#b8b8c0" stroke-width="0.8"/></svg>
<div class="a" style="left:202.3px;top:637.6px;line-height:20px;font-size:8.6px;color:#3a3a3a">声像卷内</div>
<div class="a" style="left:372.8px;top:98px;width:4.6px;height:476px;background:#c6c6c6;border-radius:2.3px"></div>
<div class="a" style="left:379px;top:97px;width:5px;height:555px;background:#f8f8f8;border-left:1px solid #dcdfe6;border-right:1px solid #dcdfe6"></div>
<div class="a" style="left:380px;top:364.0px;width:3px;height:1px;background:#9aa0aa"></div>
<div class="a" style="left:380px;top:367.0px;width:3px;height:1px;background:#c9ced6"></div>
<div class="a" style="left:380px;top:370.0px;width:3px;height:1px;background:#9aa0aa"></div>
<div class="a" style="left:380px;top:373.0px;width:3px;height:1px;background:#c9ced6"></div>
<div class="a" style="left:380px;top:376.0px;width:3px;height:1px;background:#9aa0aa"></div>
<div class="a" style="left:380px;top:379.0px;width:3px;height:1px;background:#c9ced6"></div>
<div class="a" style="left:380px;top:382.0px;width:3px;height:1px;background:#9aa0aa"></div>
<div class="a" style="left:380px;top:385.0px;width:3px;height:1px;background:#c9ced6"></div>
<div class="a" style="left:386.4px;top:104.7px;line-height:16px;font-size:11px;color:#409eff">基本信息</div>
<div class="a" style="left:461.0px;top:104.7px;line-height:16px;font-size:11px;color:#303133">列表设置</div>
<div class="a" style="left:535.6px;top:104.7px;line-height:16px;font-size:11px;color:#303133">表单设置</div>
<div class="a" style="left:609.9px;top:104.7px;line-height:16px;font-size:11px;color:#303133">手动二级分类</div>
<div class="a" style="left:705.3px;top:104.7px;line-height:16px;font-size:11px;color:#303133">智能二级分类</div>
<div class="a" style="left:386px;top:125px;width:919px;height:2px;background:#e4e7ed"></div>
<div class="a" style="left:386px;top:124.5px;width:44px;height:2px;background:#409eff"></div>
<div class="a" style="left:413.5px;top:139.2px;color:#f56c6c;font-size:8.5px;line-height:10px">*</div>
<div class="a" style="left:420.7px;top:136.8px;line-height:16px;font-size:8.5px;color:#606266">门类名称</div>
<div class="a" style="left:420.7px;top:163.2px;line-height:16px;font-size:8.5px;color:#606266">门类类型</div>
<div class="a" style="left:437.7px;top:189.8px;line-height:16px;font-size:8.5px;color:#606266">备注</div>
<div class="a" style="left:464px;top:135px;width:336px;height:21.5px;border:1px solid #dcdfe6;border-radius:3px;font-size:9.5px;line-height:22.5px;padding-left:11.5px;color:#606266;font-size:9.8px">文书档案</div>
<div class="a" style="left:464px;top:161.4px;width:152px;height:21.5px;border:1px solid #e4e7ed;background:#f5f7fa;border-radius:3px;font-size:9.8px;line-height:23px;padding-left:11.5px;color:#b8bcc4">简化</div>
<svg class="a" style="left:598.5px;top:169.8px" width="9" height="6" viewBox="0 0 9 6"><path d="M1 1 L4.5 4.5 L8 1" fill="none" stroke="#c0c4cc" stroke-width="0.9"/></svg>
<div class="a" style="left:464px;top:187.4px;width:336px;height:36.2px;border:1px solid #dcdfe6;border-radius:3px"></div>
<div class="a" style="left:386.7px;top:228px;width:919px;height:22.5px;background:#ecf5ff;font-size:8.85px;line-height:22.5px;padding-left:6px;color:#409eff">字段信息</div>
<div class="btn" style="left:386.7px;top:253.3px;width:50px;height:17px;line-height:19px;font-size:8.8px;background:#67c23a">新增字段</div>
<div class="btn" style="left:444.2px;top:253.3px;width:50px;height:17px;line-height:19px;font-size:8.8px;background:#f56c6c">删除字段</div>
<div class="btn" style="left:502px;top:253.3px;width:50px;height:17px;line-height:19px;font-size:8.8px;background:#909399">生成规则</div>
<div class="a" style="left:386px;top:274px;width:919px;height:30.8px;background:#f4f4f4;border-bottom:1px solid #e8eaf2"></div>
<div class="a" style="left:397.8px;top:283.5px;width:11px;height:11px;border:1px solid #dcdfe6;border-radius:2px;background:#fff"></div>
<div class="a" style="left:386px;top:274px;width:920px;height:30px;overflow:hidden">
<div class="a" style="left:50.4px;top:7px;line-height:16px;font-size:9.3px;font-weight:bold;color:#4f4f4f">顺序</div>
<div class="a" style="left:112.9px;top:7px;line-height:16px;font-size:9.3px;font-weight:bold;color:#4f4f4f">中文名称</div>
<div class="a" style="left:174.3px;top:7px;line-height:16px;font-size:9.3px;font-weight:bold;color:#4f4f4f">英文名称</div>
<div class="a" style="left:290.1px;top:7px;line-height:16px;font-size:9.3px;font-weight:bold;color:#4f4f4f">字段类型</div>
<div class="a" style="left:351.6px;top:7px;line-height:16px;font-size:9.3px;font-weight:bold;color:#4f4f4f">显示长度</div>
<div class="a" style="left:413.7px;top:7px;line-height:16px;font-size:9.3px;font-weight:bold;color:#4f4f4f">著录形式</div>
<div class="a" style="left:476.0px;top:7px;line-height:16px;font-size:9.3px;font-weight:bold;color:#4f4f4f">必填字段</div>
<div class="a" style="left:538.2px;top:7px;line-height:16px;font-size:9.3px;font-weight:bold;color:#4f4f4f">是否唯一</div>
<div class="a" style="left:600.3px;top:7px;line-height:16px;font-size:9.3px;font-weight:bold;color:#4f4f4f">列表显示</div>
<div class="a" style="left:661.6px;top:7px;line-height:16px;font-size:9.3px;font-weight:bold;color:#4f4f4f">表单显示</div>
<div class="a" style="left:723.7px;top:7px;line-height:16px;font-size:9.3px;font-weight:bold;color:#4f4f4f">阅读显示</div>
<div class="a" style="left:785.8px;top:7px;line-height:16px;font-size:9.3px;font-weight:bold;color:#4f4f4f">整行显示</div>
<div class="a" style="left:847.9px;top:7px;line-height:16px;font-size:9.3px;font-weight:bold;color:#4f4f4f">自动加一</div>
<div class="a" style="left:909.5px;top:7px;line-height:16px;font-size:9.3px;font-weight:bold;color:#4f4f4f">对</div>
</div>
<div class="a" style="left:386px;top:305.3px;width:912px;height:313.4px;overflow:hidden">
<div class="a" style="left:0;top:0.00px;width:912px;height:28.15px;background:#fff;border-bottom:1px solid #ebeef5">
<div class="a" style="left:15.300000000000011px;top:8.6px;width:10px;height:10.5px;border:1px solid #dcdfe6;border-radius:2px;background:#fff"></div>
<div class="a" style="left:53.19999999999999px;top:3.4px;width:41.3px;height:21.4px;border:1px solid #dcdfe6;border-radius:3px;background:#fff;padding-left:12.3px;font-size:9.6px;line-height:19.4px;color:#555">1</div>
<div class="tc" style="left:115.30000000000001px;top:6.1px">序号</div>
<div class="te" style="left:177.5px;top:6.1px">serial_no</div>
<div class="tc" style="left:292.6px;top:6.1px">字符</div>
<div class="te" style="left:355.20000000000005px;top:6.1px">100</div>
<div class="tc" style="left:416.5px;top:6.1px">文本框</div>
<div class="tc" style="left:479.0px;top:6.1px">否</div>
<div class="tc" style="left:541.1px;top:6.1px">否</div>
<div class="tc" style="left:603.2px;top:6.1px">是</div>
<div class="tc" style="left:665.3px;top:6.1px">是</div>
<div class="tc" style="left:727.4px;top:6.1px">否</div>
<div class="tc" style="left:789.5px;top:6.1px">否</div>
<div class="tc" style="left:851.6px;top:6.1px">否</div>
</div>
<div class="a" style="left:0;top:28.15px;width:912px;height:28.15px;background:#fafafa;border-bottom:1px solid #ebeef5">
<div class="a" style="left:15.300000000000011px;top:8.6px;width:10px;height:10.5px;border:1px solid #dcdfe6;border-radius:2px;background:#fff"></div>
<div class="a" style="left:53.19999999999999px;top:3.4px;width:41.3px;height:21.4px;border:1px solid #dcdfe6;border-radius:3px;background:#fff;padding-left:12.3px;font-size:9.6px;line-height:19.4px;color:#555">2</div>
<div class="tc" style="left:115.30000000000001px;top:6.1px">件号</div>
<div class="te" style="left:177.5px;top:6.1px">piece_no</div>
<div class="tc" style="left:292.6px;top:6.1px">字符</div>
<div class="te" style="left:355.20000000000005px;top:6.1px">100</div>
<div class="tc" style="left:416.5px;top:6.1px">文本框</div>
<div class="tc" style="left:479.0px;top:6.1px">否</div>
<div class="tc" style="left:541.1px;top:6.1px">否</div>
<div class="tc" style="left:603.2px;top:6.1px">是</div>
<div class="tc" style="left:665.3px;top:6.1px">否</div>
<div class="tc" style="left:727.4px;top:6.1px">否</div>
<div class="tc" style="left:789.5px;top:6.1px">否</div>
<div class="tc" style="left:851.6px;top:6.1px">否</div>
</div>
<div class="a" style="left:0;top:56.30px;width:912px;height:28.15px;background:#fff;border-bottom:1px solid #ebeef5">
<div class="a" style="left:15.300000000000011px;top:8.6px;width:10px;height:10.5px;border:1px solid #dcdfe6;border-radius:2px;background:#fff"></div>
<div class="a" style="left:53.19999999999999px;top:3.4px;width:41.3px;height:21.4px;border:1px solid #dcdfe6;border-radius:3px;background:#fff;padding-left:12.3px;font-size:9.6px;line-height:19.4px;color:#555">3</div>
<div class="tc" style="left:115.30000000000001px;top:6.1px">文号</div>
<div class="te" style="left:177.5px;top:6.1px">document_number</div>
<div class="tc" style="left:292.6px;top:6.1px">字符</div>
<div class="te" style="left:355.20000000000005px;top:6.1px">150</div>
<div class="tc" style="left:416.5px;top:6.1px">文本框</div>
<div class="tc" style="left:479.0px;top:6.1px">否</div>
<div class="tc" style="left:541.1px;top:6.1px">否</div>
<div class="tc" style="left:603.2px;top:6.1px">是</div>
<div class="tc" style="left:665.3px;top:6.1px">是</div>
<div class="tc" style="left:727.4px;top:6.1px">否</div>
<div class="tc" style="left:789.5px;top:6.1px">否</div>
<div class="tc" style="left:851.6px;top:6.1px">否</div>
</div>
<div class="a" style="left:0;top:84.45px;width:912px;height:28.15px;background:#fafafa;border-bottom:1px solid #ebeef5">
<div class="a" style="left:15.300000000000011px;top:8.6px;width:10px;height:10.5px;border:1px solid #dcdfe6;border-radius:2px;background:#fff"></div>
<div class="a" style="left:53.19999999999999px;top:3.4px;width:41.3px;height:21.4px;border:1px solid #dcdfe6;border-radius:3px;background:#fff;padding-left:12.3px;font-size:9.6px;line-height:19.4px;color:#555">4</div>
<div class="tc" style="left:115.30000000000001px;top:6.1px">责任者</div>
<div class="te" style="left:177.5px;top:6.1px">responsibleby</div>
<div class="tc" style="left:292.6px;top:6.1px">字符</div>
<div class="te" style="left:355.20000000000005px;top:6.1px">100</div>
<div class="tc" style="left:416.5px;top:6.1px">文本框</div>
<div class="tc" style="left:479.0px;top:6.1px">否</div>
<div class="tc" style="left:541.1px;top:6.1px">否</div>
<div class="tc" style="left:603.2px;top:6.1px">是</div>
<div class="tc" style="left:665.3px;top:6.1px">是</div>
<div class="tc" style="left:727.4px;top:6.1px">是</div>
<div class="tc" style="left:789.5px;top:6.1px">否</div>
<div class="tc" style="left:851.6px;top:6.1px">否</div>
</div>
<div class="a" style="left:0;top:112.60px;width:912px;height:28.15px;background:#fff;border-bottom:1px solid #ebeef5">
<div class="a" style="left:15.300000000000011px;top:8.6px;width:10px;height:10.5px;border:1px solid #dcdfe6;border-radius:2px;background:#fff"></div>
<div class="a" style="left:53.19999999999999px;top:3.4px;width:41.3px;height:21.4px;border:1px solid #dcdfe6;border-radius:3px;background:#fff;padding-left:12.3px;font-size:9.6px;line-height:19.4px;color:#555">5</div>
<div class="tc" style="left:115.30000000000001px;top:6.1px">题名</div>
<div class="te" style="left:177.5px;top:6.1px">title</div>
<div class="tc" style="left:292.6px;top:6.1px">字符</div>
<div class="te" style="left:355.20000000000005px;top:6.1px">300</div>
<div class="tc" style="left:416.5px;top:6.1px">文本框</div>
<div class="tc" style="left:479.0px;top:6.1px">否</div>
<div class="tc" style="left:541.1px;top:6.1px">否</div>
<div class="tc" style="left:603.2px;top:6.1px">是</div>
<div class="tc" style="left:665.3px;top:6.1px">是</div>
<div class="tc" style="left:727.4px;top:6.1px">是</div>
<div class="tc" style="left:789.5px;top:6.1px">否</div>
<div class="tc" style="left:851.6px;top:6.1px">否</div>
</div>
<div class="a" style="left:0;top:140.75px;width:912px;height:28.15px;background:#fafafa;border-bottom:1px solid #ebeef5">
<div class="a" style="left:15.300000000000011px;top:8.6px;width:10px;height:10.5px;border:1px solid #dcdfe6;border-radius:2px;background:#fff"></div>
<div class="a" style="left:53.19999999999999px;top:3.4px;width:41.3px;height:21.4px;border:1px solid #dcdfe6;border-radius:3px;background:#fff;padding-left:12.3px;font-size:9.6px;line-height:19.4px;color:#555">6</div>
<div class="tc" style="left:115.30000000000001px;top:6.1px">日期</div>
<div class="te" style="left:177.5px;top:6.1px">created_date</div>
<div class="tc" style="left:292.6px;top:6.1px">字符</div>
<div class="te" style="left:355.20000000000005px;top:6.1px">140</div>
<div class="tc" style="left:416.5px;top:6.1px">日期框</div>
<div class="tc" style="left:479.0px;top:6.1px">否</div>
<div class="tc" style="left:541.1px;top:6.1px">否</div>
<div class="tc" style="left:603.2px;top:6.1px">是</div>
<div class="tc" style="left:665.3px;top:6.1px">是</div>
<div class="tc" style="left:727.4px;top:6.1px">是</div>
<div class="tc" style="left:789.5px;top:6.1px">否</div>
<div class="tc" style="left:851.6px;top:6.1px">否</div>
</div>
<div class="a" style="left:0;top:168.90px;width:912px;height:28.15px;background:#fff;border-bottom:1px solid #ebeef5">
<div class="a" style="left:15.300000000000011px;top:8.6px;width:10px;height:10.5px;border:1px solid #dcdfe6;border-radius:2px;background:#fff"></div>
<div class="a" style="left:53.19999999999999px;top:3.4px;width:41.3px;height:21.4px;border:1px solid #dcdfe6;border-radius:3px;background:#fff;padding-left:12.3px;font-size:9.6px;line-height:19.4px;color:#555">7</div>
<div class="tc" style="left:115.30000000000001px;top:6.1px">页数</div>
<div class="te" style="left:177.5px;top:6.1px">page_no</div>
<div class="tc" style="left:292.6px;top:6.1px">字符</div>
<div class="te" style="left:355.20000000000005px;top:6.1px">100</div>
<div class="tc" style="left:416.5px;top:6.1px">数字框</div>
<div class="tc" style="left:479.0px;top:6.1px">否</div>
<div class="tc" style="left:541.1px;top:6.1px">否</div>
<div class="tc" style="left:603.2px;top:6.1px">是</div>
<div class="tc" style="left:665.3px;top:6.1px">是</div>
<div class="tc" style="left:727.4px;top:6.1px">否</div>
<div class="tc" style="left:789.5px;top:6.1px">否</div>
<div class="tc" style="left:851.6px;top:6.1px">否</div>
</div>
<div class="a" style="left:0;top:197.05px;width:912px;height:28.15px;background:#fafafa;border-bottom:1px solid #ebeef5">
<div class="a" style="left:15.300000000000011px;top:8.6px;width:10px;height:10.5px;border:1px solid #dcdfe6;border-radius:2px;background:#fff"></div>
<div class="a" style="left:53.19999999999999px;top:3.4px;width:41.3px;height:21.4px;border:1px solid #dcdfe6;border-radius:3px;background:#fff;padding-left:12.3px;font-size:9.6px;line-height:19.4px;color:#555">8</div>
<div class="tc" style="left:115.30000000000001px;top:6.1px">部门</div>
<div class="te" style="left:177.5px;top:6.1px">department</div>
<div class="tc" style="left:292.6px;top:6.1px">字符</div>
<div class="te" style="left:355.20000000000005px;top:6.1px">100</div>
<div class="tc" style="left:416.5px;top:6.1px">文本框</div>
<div class="tc" style="left:479.0px;top:6.1px">否</div>
<div class="tc" style="left:541.1px;top:6.1px">否</div>
<div class="tc" style="left:603.2px;top:6.1px">是</div>
<div class="tc" style="left:665.3px;top:6.1px">是</div>
<div class="tc" style="left:727.4px;top:6.1px">是</div>
<div class="tc" style="left:789.5px;top:6.1px">否</div>
<div class="tc" style="left:851.6px;top:6.1px">否</div>
</div>
<div class="a" style="left:0;top:225.20px;width:912px;height:28.15px;background:#fff;border-bottom:1px solid #ebeef5">
<div class="a" style="left:15.300000000000011px;top:8.6px;width:10px;height:10.5px;border:1px solid #dcdfe6;border-radius:2px;background:#fff"></div>
<div class="a" style="left:53.19999999999999px;top:3.4px;width:41.3px;height:21.4px;border:1px solid #dcdfe6;border-radius:3px;background:#fff;padding-left:12.3px;font-size:9.6px;line-height:19.4px;color:#555">9</div>
<div class="tc" style="left:115.30000000000001px;top:6.1px">备注</div>
<div class="te" style="left:177.5px;top:6.1px">remarks</div>
<div class="tc" style="left:292.6px;top:6.1px">字符</div>
<div class="te" style="left:355.20000000000005px;top:6.1px">100</div>
<div class="tc" style="left:416.5px;top:6.1px">文本框</div>
<div class="tc" style="left:479.0px;top:6.1px">否</div>
<div class="tc" style="left:541.1px;top:6.1px">否</div>
<div class="tc" style="left:603.2px;top:6.1px">是</div>
<div class="tc" style="left:665.3px;top:6.1px">是</div>
<div class="tc" style="left:727.4px;top:6.1px">否</div>
<div class="tc" style="left:789.5px;top:6.1px">否</div>
<div class="tc" style="left:851.6px;top:6.1px">否</div>
</div>
<div class="a" style="left:0;top:253.35px;width:912px;height:28.15px;background:#fafafa;border-bottom:1px solid #ebeef5">
<div class="a" style="left:15.300000000000011px;top:8.6px;width:10px;height:10.5px;border:1px solid #dcdfe6;border-radius:2px;background:#fff"></div>
<div class="a" style="left:53.19999999999999px;top:3.4px;width:41.3px;height:21.4px;border:1px solid #dcdfe6;border-radius:3px;background:#fff;padding-left:12.3px;font-size:9.6px;line-height:19.4px;color:#555">10</div>
<div class="tc" style="left:115.30000000000001px;top:6.1px">盒号</div>
<div class="te" style="left:177.5px;top:6.1px">box_number</div>
<div class="tc" style="left:292.6px;top:6.1px">字符</div>
<div class="te" style="left:355.20000000000005px;top:6.1px">100</div>
<div class="tc" style="left:416.5px;top:6.1px">文本框</div>
<div class="tc" style="left:479.0px;top:6.1px">否</div>
<div class="tc" style="left:541.1px;top:6.1px">否</div>
<div class="tc" style="left:603.2px;top:6.1px">是</div>
<div class="tc" style="left:665.3px;top:6.1px">是</div>
<div class="tc" style="left:727.4px;top:6.1px">否</div>
<div class="tc" style="left:789.5px;top:6.1px">否</div>
<div class="tc" style="left:851.6px;top:6.1px">否</div>
</div>
<div class="a" style="left:0;top:281.50px;width:912px;height:40px;background:#fff;border-bottom:1px solid #ebeef5">
<div class="a" style="left:15.300000000000011px;top:15.0px;width:10px;height:10.5px;border:1px solid #dcdfe6;border-radius:2px;background:#fff"></div>
<div class="a" style="left:53.19999999999999px;top:9.8px;width:41.3px;height:21.4px;border:1px solid #dcdfe6;border-radius:3px;background:#fff;padding-left:12.3px;font-size:9.6px;line-height:19.4px;color:#555">11</div>
<div class="tc" style="left:115.30000000000001px;top:12.5px">保管期限</div>
<div class="te" style="left:177.5px;top:12.5px">retention</div>
<div class="tc" style="left:292.6px;top:12.5px">字符</div>
<div class="te" style="left:355.20000000000005px;top:12.5px">100</div>
<div class="tc" style="left:416.5px;top:12.5px">下拉框</div>
<div class="tc" style="left:479.0px;top:12.5px">否</div>
<div class="tc" style="left:541.1px;top:12.5px">否</div>
<div class="tc" style="left:603.2px;top:12.5px">是</div>
<div class="tc" style="left:665.3px;top:12.5px">是</div>
<div class="tc" style="left:727.4px;top:12.5px">是</div>
<div class="tc" style="left:789.5px;top:12.5px">否</div>
<div class="tc" style="left:851.6px;top:12.5px">否</div>
</div>
</div>
<div class="a" style="left:1298.5px;top:305px;width:5px;height:132px;background:#c1c1c1;border-radius:2px"></div>
<div class="a" style="left:387.9px;top:618.7px;width:806px;height:5px;background:#c1c1c1;border-radius:2.5px"></div>
<div class="a" style="left:657.3px;top:628.6px;line-height:16px;font-size:8.6px;color:#606266">共 25 条</div>
<div class="a" style="left:700.2px;top:629.2px;width:61px;height:17.3px;border:1px solid #dcdfe6;border-radius:3px;font-size:8.6px;line-height:15px;padding-left:6px;color:#606266">100条/页</div>
<svg class="a" style="left:748.8px;top:635px" width="9" height="6" viewBox="0 0 9 6"><path d="M1 1 L4.5 4.5 L8 1" fill="none" stroke="#c0c4cc" stroke-width="0.8"/></svg>
<div class="a" style="left:769.3px;top:629.2px;width:15.5px;height:17px;background:#f4f4f5;border-radius:2px"></div>
<div class="a" style="left:792.6px;top:629.2px;width:15.5px;height:17px;background:#f4f4f5;border-radius:2px"></div>
<svg class="a" style="left:774px;top:633.5px" width="6" height="9" viewBox="0 0 6 9"><path d="M4.5 1 L1.5 4.5 L4.5 8" fill="none" stroke="#c0c4cc" stroke-width="0.9"/></svg>
<svg class="a" style="left:797.5px;top:633.5px" width="6" height="9" viewBox="0 0 6 9"><path d="M1.5 1 L4.5 4.5 L1.5 8" fill="none" stroke="#c0c4cc" stroke-width="0.9"/></svg>
<div class="a" style="left:819.7px;top:628.6px;line-height:16px;font-size:8.6px;color:#606266">前往</div>
<div class="a" style="left:840.2px;top:629.2px;width:34px;height:17.3px;border:1px solid #dcdfe6;border-radius:3px;font-size:8.6px;line-height:15px;text-align:center;color:#606266">1</div>
<div class="a" style="left:878.5px;top:628.6px;line-height:16px;font-size:8.7px;color:#606266">页</div>
<div class="a" style="left:891.9px;top:628.6px;line-height:16px;font-size:8.7px;color:#606266">首页</div>
<div class="a" style="left:919.4px;top:628.6px;line-height:16px;font-size:8.7px;color:#606266">尾页</div>
<div class="a" style="left:961.6px;top:628.6px;line-height:16px;font-size:8.3px;color:#606266">当前 25 条</div>
<div class="a" style="left:1008.7px;top:628.6px;line-height:16px;font-size:8.3px;color:#606266">共 1 页</div>
<svg class="a" style="left:944.8px;top:632px" width="10" height="10" viewBox="0 0 10 10"><path d="M1.54 7 A4 4 0 0 1 6.6 1.3 M8.46 3 A4 4 0 0 1 3.4 8.7" fill="none" stroke="#606266" stroke-width="1.1"/><path d="M5.6 0 L8.6 1.9 L5.4 3.3 Z M4.4 10 L1.4 8.1 L4.6 6.7 Z" fill="#606266"/></svg>
</div></body></html>
